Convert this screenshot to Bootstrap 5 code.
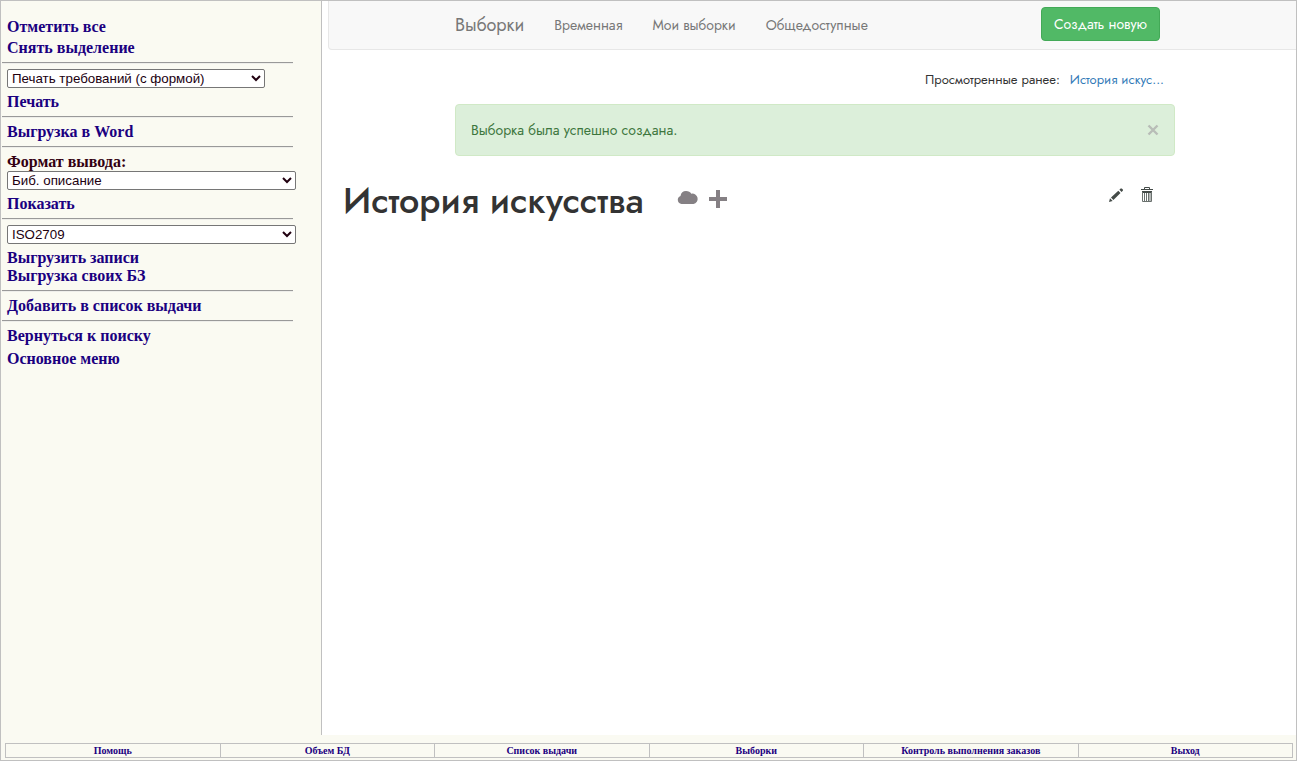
<!DOCTYPE html>
<html lang="ru">
<head>
<meta charset="utf-8">
<meta name="viewport" content="width=device-width, initial-scale=1">
<title>Выборки</title>
<link rel="stylesheet" href="https://cdn.jsdelivr.net/npm/bootstrap@5.3.0/dist/css/bootstrap.min.css">
<script defer src="https://cdn.jsdelivr.net/npm/bootstrap@5.3.0/dist/js/bootstrap.bundle.min.js"></script>
<style>
  body { font-family: Jost, Lato, sans-serif; font-size: 14px; line-height: 20px; color: #333; }
  .shell { border: 1px solid #c0c0c0; background: #fafaf2; }
  a { text-decoration: none; }

  .side { flex: 0 0 321px; padding-top: 17px; border-right: 1px solid #c0c0c0;
    font: bold 16px/18px "Liberation Serif", serif; }
  .side a, .footer-menu a { color: #1a0080; }
  .side a, .side label { display: block; margin-left: 6px; }
  .side label { color: #330011; }
  .side a + a { margin-top: 3px; }
  .side a + a.tight { margin-top: 0; }
  .side a + a.loose { margin-top: 5px; }
  .side hr { margin: 5px 28px 5px 1px; border: 0; height: 2px; opacity: 1;
    background: linear-gradient(#999 50%, #eeeeea 50%); }
  .side select { display: block; width: 289px; height: 19px; margin: 0 0 5px 6px; padding: 0;
    border: 1px solid #767676; border-radius: 2px; background: #fff; color: #210010;
    font-family: "Liberation Sans", sans-serif; font-size: revert; font-weight: 400; line-height: normal; }
  .side select.short { width: 258px; }

  .pane { background: #fff; padding-left: 6px; overflow: hidden; }
  .sheet { margin-right: -6px; }
  .mid { max-width: 750px; padding: 0 15px; }
  .topbar { padding: 0; background: #f8f8f8; border: 1px solid #e7e7e7; border-top: 0;
    border-radius: 0 0 4px 4px; }
  .topbar .navbar-brand { font-size: 18px; color: #777; margin: 0 15px 0 0; padding: 0; }
  .topbar .navbar-nav .nav-link { color: #777; padding: 14px 15px; }
  .btn-create { background: #51b966; border: 1px solid #43a957; color: #fff; font-size: 14px;
    line-height: 20px; padding: 6px 12px; margin: 0 15px 2px 0; border-radius: 4px; }
  .btn-create:hover { background: #43a957; color: #fff; }
  .recent { padding: 20px 11px 14px; font-size: 13px; gap: 10px; }
  .recent a { color: #337ab7; }
  .notice { padding: 15px; margin: 0 0 20px; border: 1px solid #d0e9c6; border-radius: 4px;
    background: #dcefda; color: #3c763d; }
  .icon-btn { padding: 0; border: 0; background: none; line-height: 0; }
  .heading { padding: 0 148px 0 15px; }
  .heading h1 { font-size: 36px; line-height: 40px; font-weight: 500; margin: 4px 33px 0 0; }
  .status-icons { padding-top: 13px; gap: 9px; }
  .tool-icons { padding-top: 11px; }

  .footer-menu { padding: 8px 3px 2px 4px; }
  .footer-menu td { border: 1px solid #c0c0c0; padding: 0; text-align: center;
    font: bold 10px/13px "Liberation Serif", serif; }
  .footer-menu table { table-layout: fixed; border-collapse: collapse; }
</style>
</head>
<body>
<div class="shell d-flex flex-column min-vh-100">
  <div class="d-flex flex-grow-1">
    <aside class="side">
      <a href="#">Отметить все</a>
      <a href="#">Снять выделение</a>
      <hr>
      <select class="short" aria-label="Вид печати"><option>Печать требований (с формой)</option></select>
      <a href="#">Печать</a>
      <hr>
      <a href="#">Выгрузка в Word</a>
      <hr>
      <label for="format">Формат вывода:</label>
      <select id="format"><option>Биб. описание</option></select>
      <a href="#">Показать</a>
      <hr>
      <select aria-label="Формат выгрузки"><option>ISO2709</option></select>
      <a href="#">Выгрузить записи</a>
      <a href="#" class="tight">Выгрузка своих БЗ</a>
      <hr>
      <a href="#">Добавить в список выдачи</a>
      <hr>
      <a href="#">Вернуться к поиску</a>
      <a href="#" class="loose">Основное меню</a>
    </aside>

    <main class="pane flex-grow-1">
      <div class="sheet">
        <nav class="topbar navbar navbar-expand">
          <div class="mid container d-flex align-items-center">
            <a class="navbar-brand" href="#">Выборки</a>
            <div class="navbar-nav me-auto">
              <a class="nav-link" href="#">Временная</a>
              <a class="nav-link" href="#">Мои выборки</a>
              <a class="nav-link" href="#">Общедоступные</a>
            </div>
            <button type="button" class="btn btn-create">Создать новую</button>
          </div>
        </nav>
        <div class="mid container">
          <div class="recent d-flex justify-content-end">
            <span>Просмотренные ранее:</span><a href="#">История искус...</a>
          </div>
          <div class="notice d-flex justify-content-between align-items-center" role="alert">
            <span>Выборка была успешно создана.</span>
            <button type="button" class="icon-btn" aria-label="Закрыть">
              <svg width="12" height="12" viewBox="0 0 12 12"><path d="M1.500 1.500l9 9M10.500 1.500l-9 9" stroke="#b8bdb7" stroke-width="2.400"/></svg>
            </button>
          </div>
        </div>
        <div class="heading d-flex align-items-start">
          <h1>История искусства</h1>
          <div class="status-icons d-flex align-items-center me-auto">
            <svg width="22" height="20" viewBox="0 0 22 20" fill="#858084"><path d="M4.500 15A4.200 4.200 0 0 1 3.500 6.900C4 3.700 6 2 9 2C11.500 2 13.300 3 14.300 4.700A5.200 5.200 0 1 1 16.500 15Z"/></svg>
            <button type="button" class="icon-btn" aria-label="Добавить">
              <svg width="20" height="20" viewBox="0 0 20 20" fill="#858084"><path d="M8 1h4v7h7v4h-7v7H8v-7H1V8h7z"/></svg>
            </button>
          </div>
          <div class="tool-icons d-flex gap-3">
            <button type="button" class="icon-btn" aria-label="Редактировать">
              <svg width="16" height="16" viewBox="0 0 16 16" fill="#444b48"><path d="M1 15l1-3.700 2.700 2.700zM3 10.600L10.300 3.800l2.200 2.200L5.400 13.100zM11.400 2.700l1.200-1.100q.6-.4 1.200 0l1 1q.5.600 0 1.200L13.600 5z"/></svg>
            </button>
            <button type="button" class="icon-btn" aria-label="Удалить">
              <svg width="14" height="16" viewBox="0 0 14 16"><path d="M4.500 2.500V.5h5v2" fill="none" stroke="#444b48"/><path d="M1 2h12v1H1zM2 4h10v2H2z" fill="#444b48"/><path d="M2.500 5v9.500h9V5M4.500 6v8M6.500 6v8M8.500 6v8M10 6v8" fill="none" stroke="#6a716e"/></svg>
            </button>
          </div>
        </div>
      </div>
    </main>
  </div>

  <footer class="footer-menu">
    <table class="w-100">
      <tbody><tr>
        <td><a href="#">Помощь</a></td>
        <td><a href="#">Объем БД</a></td>
        <td><a href="#">Список выдачи</a></td>
        <td><a href="#">Выборки</a></td>
        <td><a href="#">Контроль выполнения заказов</a></td>
        <td><a href="#">Выход</a></td>
      </tr></tbody>
    </table>
  </footer>
</div>
</body>
</html>
